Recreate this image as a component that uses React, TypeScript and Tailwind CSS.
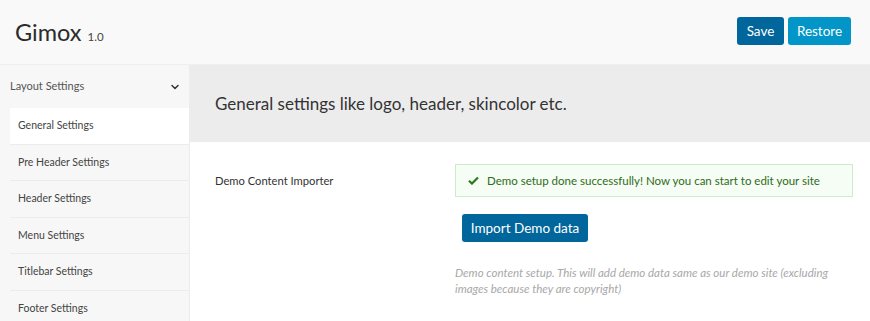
import React from 'react'
import { ChevronDown } from 'lucide-react'

const menuItems = [
  'General Settings',
  'Pre Header Settings',
  'Header Settings',
  'Menu Settings',
  'Titlebar Settings',
  'Footer Settings',
]

const CheckIcon = () => (
  <svg viewBox="0 0 12 10" className="w-[11px] h-[9px]">
    <path d="M1 5.2 L4.3 8.4 L11 1.6" fill="none" stroke="#2a7a1c" strokeWidth="2.4" />
  </svg>
)

const App: React.FC = () => {
  return (
    <div
      className="w-[870px] h-[321px] overflow-hidden bg-white text-[#333]"
      style={{ fontFamily: 'Lato, "Noto Sans", sans-serif' }}
    >
      {/* Top bar */}
      <div className="h-[65px] bg-[#f9f9f9] border-b border-[#efefef] flex items-center justify-between pl-[15px] pr-[19px]">
        <div className="flex items-baseline gap-[6px] pt-[2px]">
          <span className="text-[23.5px] text-[#2b2b2b]">Gimox</span>
          <span className="text-[11.5px] text-[#444]">1.0</span>
        </div>
        <div className="flex gap-[4px] pb-[2px]">
          <button className="h-[28px] w-[47px] rounded-[3px] bg-[#00669b] text-white text-[13.5px]">Save</button>
          <button className="h-[28px] w-[63px] rounded-[3px] bg-[#0296c8] text-white text-[13.5px]">Restore</button>
        </div>
      </div>

      <div className="flex">
        {/* Sidebar */}
        <div className="w-[190px] shrink-0 bg-[#f7f7f7] border-r border-[#ececec]">
          <div className="h-[43px] flex items-center justify-between pl-[10px] pr-[8px] text-[11px] text-[#555]">
            <span>Layout Settings</span>
            <ChevronDown className="w-[12px] h-[12px] text-[#333]" strokeWidth={3} />
          </div>
          <div className="ml-[10px]">
            {menuItems.map((item, i) => (
              <div
                key={item}
                className={`h-[36.6px] flex items-center pl-[8px] text-[10.5px] text-[#444] border-b border-[#ececec] ${
                  i === 0 ? 'bg-white' : 'bg-[#f7f7f7]'
                }`}
              >
                {item}
              </div>
            ))}
          </div>
        </div>

        {/* Main content */}
        <div className="flex-1">
          <div className="h-[77px] bg-[#ececec] flex items-center pl-[25px] text-[17px] text-[#333]">
            General settings like logo, header, skincolor etc.
          </div>
          <div className="flex pt-[22px]">
            <div className="w-[265px] pl-[25px] pt-[9px] text-[11.2px] text-[#333]">Demo Content Importer</div>
            <div className="flex-1 pr-[17px]">
              <div className="h-[33px] flex items-center gap-[8px] pl-[12px] border border-[#cdeccb] bg-[#f6fdf4] text-[11.5px] text-[#2e6b22]">
                <CheckIcon />
                <span>Demo setup done successfully! Now you can start to edit your site</span>
              </div>
              <button className="mt-[17px] ml-[7px] h-[28px] w-[126px] rounded-[3px] bg-[#00669b] text-white text-[13.5px]">
                Import Demo data
              </button>
              <p className="mt-[23px] text-[11.5px] italic text-[#a8a8a8] leading-[16px]">
                Demo content setup. This will add demo data same as our demo site (excluding images because they are copyright)
              </p>
            </div>
          </div>
        </div>
      </div>
    </div>
  )
}

export default App
